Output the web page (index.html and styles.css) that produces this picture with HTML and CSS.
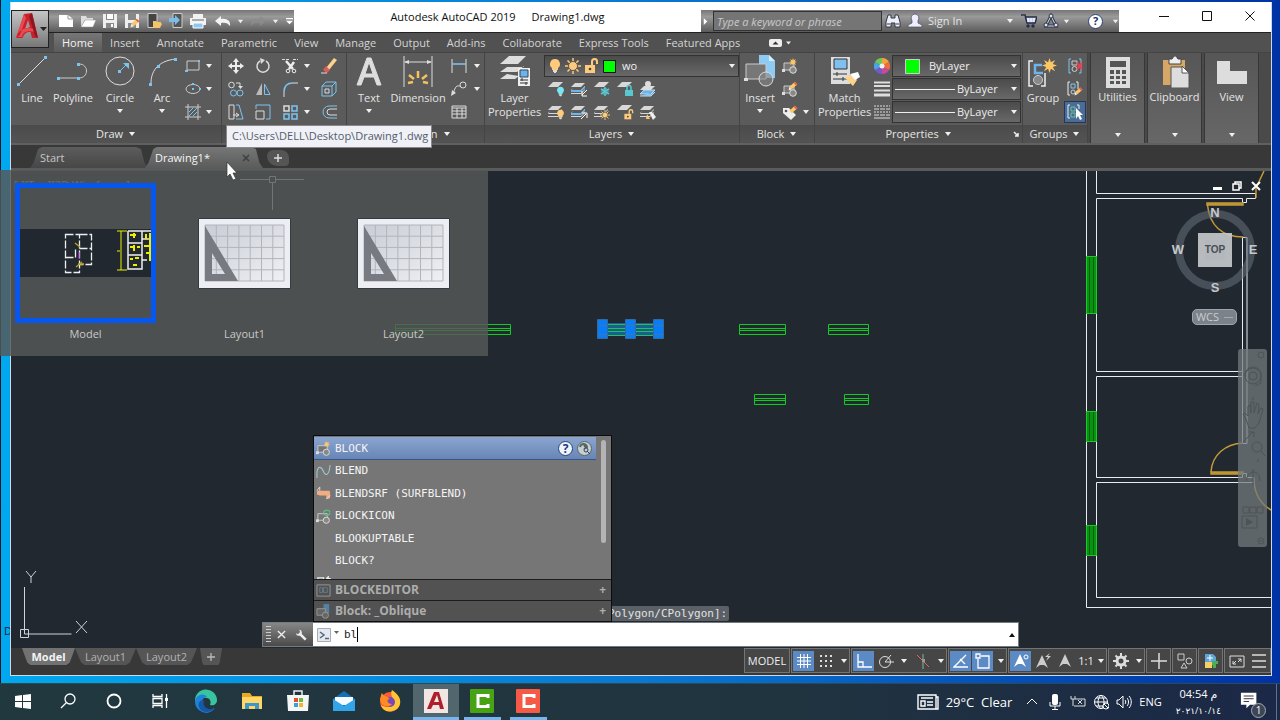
FILE: index.html
```html
<!DOCTYPE html>
<html lang="en">
<head>
<meta charset="utf-8">
<title>Autodesk AutoCAD 2019 - Drawing1.dwg</title>
<link rel="stylesheet" href="styles.css">
</head>
<body>
<svg class="defs" aria-hidden="true">
  <defs>
    <symbol id="down" viewBox="0 0 8 8"><path d="M1 2h6L4 6z" fill="currentColor"/></symbol>
    <symbol id="layers" viewBox="0 0 16 16"><path d="M4 2h10l-4 4H0zM2 7l-2 2h10l4-4v1l-4 4H0M0 12h10l4-4v1l-4 4H0z" fill="#d8d8d8"/></symbol>
    <symbol id="sheet" viewBox="0 0 16 16"><path d="M5 1h10l-5 5H0z" fill="#d8d8d8"/></symbol>
    <symbol id="bulb" viewBox="0 0 16 16"><path d="M8 1a5 5 0 0 0-3 9v2h6v-2a5 5 0 0 0-3-9z" fill="#fdcb7b"/><path d="M6 12h4v2H9v1H7v-1H6z" fill="#ddd"/></symbol>
    <symbol id="sun" viewBox="0 0 16 16"><path d="M8 0v16M0 8h16M2.500 2.500l11 11M13.500 2.500l-11 11" stroke="#fdcb7b" stroke-width="1.500"/><circle cx="8" cy="8" r="4.500" fill="#fdcb7b" stroke="#555"/></symbol>
    <symbol id="unlock" viewBox="0 0 16 16"><path d="M2 7h10v8H2z" fill="#fdcb7b"/><path d="M9 7V3.500a2.500 2.500 0 0 1 5 0V6" fill="none" stroke="#fdcb7b" stroke-width="2"/><circle cx="7" cy="11" r="1.300" fill="#444"/></symbol>
    <symbol id="blockic" viewBox="0 0 16 16"><path d="M2 5h10v7H2z" fill="#777" stroke="#ccc"/><path d="M0 11h3v3H0z" fill="#ddd"/><circle cx="11" cy="12" r="3.300" fill="#888" stroke="#ddd"/></symbol>
    <symbol id="star" viewBox="0 0 16 16"><path d="M8 0l1.500 4.500L14 2l-2.500 4.500L16 8l-4.500 1.500L14 14l-4.500-2.500L8 16l-1.500-4.500L2 14l2.500-4.500L0 8l4.500-1.500L2 2l4.500 2.500z" fill="#fdc766"/></symbol>
    <symbol id="pencil" viewBox="0 0 16 16"><path d="M11 1l4 4-9 8-4-4z" fill="#fdc766"/><path d="M11 1l4 4-2 2-4-4z" fill="#e06050"/><path d="M2 9l4 4-5 2z" fill="#eee"/></symbol>
    <linearGradient id="paper" x1="0" y1="0" x2="1" y2="1"><stop offset="0" stop-color="#c9ccd6"/><stop offset="1" stop-color="#eff0f3"/></linearGradient>
    <symbol id="sheet-paper" viewBox="0 0 93 71">
      <path d="M.5.500h92v70H.5z" fill="#eceef3" stroke="#333a42"/>
      <path d="M7 7h79v56H7z" fill="url(#paper)"/>
      <path d="M7 7h79v56H7zM18.300 7v56M29.600 7v56M40.900 7v56M52.200 7v56M63.500 7v56M74.800 7v56M7 18.200h79M7 29.400h79M7 40.600h79M7 51.800h79" fill="none" stroke="#b1b4bb"/>
      <path d="M7 8v55h33zM14 35l13 21H14z" fill="#777a80" fill-rule="evenodd"/>
    </symbol>
  </defs>
</svg>

<div class="desktop">
  <span class="desk-label">D</span>
  <main class="window">
    <header class="titlebar">
      <div class="quick">
        <button class="qb" aria-label="New"><svg viewBox="0 0 16 16"><path d="M1 2h9l5 4v8H1z" fill="#fff"/><path d="M10 2v4h5" fill="none" stroke="#999"/></svg></button>
        <button class="qb" aria-label="Open"><svg viewBox="0 0 16 16"><path d="M1 14V3h5l1 2h6v2H5z" fill="#ddd"/><path d="M5 7h11l-3 7H1z" fill="#fff" stroke="#888" stroke-width=".5"/></svg></button>
        <button class="qb" aria-label="Save"><svg viewBox="0 0 16 16"><path d="M1 1h14v14H1z" fill="#eee"/><path d="M4 1h8v6H4zM4 10h8v5H4z" fill="#888"/><path d="M5 1h6v5H5zM9 11h2v3H9z" fill="#fff"/></svg></button>
        <button class="qb" aria-label="Save as"><svg viewBox="0 0 16 16"><path d="M1 1h14v14H1z" fill="#eee"/><path d="M4 1h8v6H4zM4 10h8v5H4z" fill="#888"/><use href="#pencil" x="6" y="5" width="10" height="10"/></svg></button>
        <button class="qb" aria-label="Open from mobile"><svg viewBox="0 0 16 16"><path d="M2 .5h9v14H2z" fill="#444" stroke="#ccc"/><path d="M7 15V8h3l1 1h4v1l1 1-2 4z" fill="#f4c46b"/></svg></button>
        <button class="qb" aria-label="Save to mobile"><svg viewBox="0 0 16 16"><path d="M5 .5h9v14H5z" fill="#555" stroke="#ccc"/><path d="M1 5h6V2l5 5-5 5V9H1z" fill="#79bde8"/></svg></button>
        <button class="qb" aria-label="Plot"><svg viewBox="0 0 16 16"><path d="M3 1h10v4H3zM0 5h16v7H0z" fill="#f2f2f2"/><path d="M2 7h12" stroke="#666"/><path d="M3 10h10v5H3z" fill="#8dc8f0" stroke="#fff"/></svg></button>
        <button class="qb wide" aria-label="Undo"><svg viewBox="0 0 16 16"><path d="M0 8l6-5v3c6-1 10 2 9 7-2-3-5-4-9-3v3z" fill="#f4f4f4"/></svg></button>
        <button class="arrow" aria-label="Undo list"><svg><use href="#down"/></svg></button>
        <button class="qb wide dim" aria-label="Redo"><svg viewBox="0 0 16 16"><path d="M16 8l-6-5v3C4 5 0 8 1 13c2-3 5-4 9-3v3z" fill="#8b8b8b"/></svg></button>
        <button class="arrow" aria-label="Redo list"><svg><use href="#down"/></svg></button>
        <button class="arrow big" aria-label="Customize"><svg viewBox="0 0 8 8"><path d="M0 0h8v1.500H0zM0 3h8L4 7z" fill="#fff"/></svg></button>
      </div>
      <h1 class="title"><span>Autodesk AutoCAD 2019</span><span>Drawing1.dwg</span></h1>
      <div class="infocenter">
        <button class="arrow" aria-label="Collapse search"><svg viewBox="0 0 8 8"><path d="M2 0v8l4-4z" fill="#fff"/></svg></button>
        <input class="search" type="text" placeholder="Type a keyword or phrase" aria-label="Type a keyword or phrase">
        <button class="qb" aria-label="Search"><svg viewBox="0 0 16 16"><path d="M3 2h3v3h4V2h3l2 7v5h-5v-4H6v4H1V9z" fill="#eef0f6" stroke="#30374e"/><path d="M2 11h3M11 11h3" stroke="#30374e"/></svg></button>
        <button class="signin"><svg viewBox="0 0 16 16"><path d="M8 1a4 4 0 0 0-3 6.500V10l-4 2v2h14v-2l-4-2V7.500A4 4 0 0 0 8 1z" fill="#eef" stroke="#454b60" stroke-width=".7"/></svg><span>Sign In</span><svg class="caret"><use href="#down"/></svg></button>
        <button class="qb cart" aria-label="App store"><svg viewBox="0 0 16 16"><path d="M0 2h4l2 8h8l2-6H5" fill="#ccd0e4" stroke="#252d4a" stroke-width="1.500"/><path d="M7 5v4M10 5v4M13 5v4" stroke="#fff"/><g fill="#252d4a"><circle cx="7" cy="13" r="1.700"/><circle cx="12" cy="13" r="1.700"/></g></svg></button>
        <button class="qb" aria-label="Autodesk 360"><svg viewBox="0 0 16 16"><path d="M8 3l5 10H3z" fill="none" stroke="#30374e" stroke-width="3"/><path d="M8 3l5 10H3z" fill="none" stroke="#dfe3ef"/><g fill="#dfe3ef" stroke="#30374e"><circle cx="8" cy="3" r="2"/><circle cx="3" cy="12" r="2"/><circle cx="13" cy="12" r="2"/></g></svg></button>
        <button class="arrow" aria-label="360 menu"><svg><use href="#down"/></svg></button>
        <button class="help" aria-label="Help">?</button>
        <button class="arrow" aria-label="Help menu"><svg><use href="#down"/></svg></button>
      </div>
      <div class="winctl">
        <button aria-label="Minimize"><svg viewBox="0 0 12 12"><path d="M1 6.500h10" stroke="#111"/></svg></button>
        <button aria-label="Maximize"><svg viewBox="0 0 12 12"><path d="M1.500 1.500h9v9h-9z" fill="none" stroke="#111"/></svg></button>
        <button aria-label="Close"><svg viewBox="0 0 12 12"><path d="M1.500 1.500l9 9M10.500 1.500l-9 9" stroke="#111"/></svg></button>
      </div>
      <button class="appmenu" aria-label="Application menu"><svg viewBox="0 0 36 36"><path d="M12 3l8-1 6 25h-6l-1.500-6c-4 0-6 1-8 6H4z" fill="#c8202c"/><path d="M16 9l2 7-5 2z" fill="#9b9b9b"/><path d="M4 26c3-7 9-11 18-8l1 3c-8-2-12 0-13 5zM12 3L4 27l4-3 6-17z" fill="#e84a50"/><path d="M20 2l6 25-3-2-6-20z" fill="#8f1720"/><path d="M28 16h7l-3.500 4z" fill="#222"/></svg></button>
    </header>

    <nav class="menu">
      <button class="on">Home</button><button>Insert</button><button>Annotate</button><button>Parametric</button><button>View</button><button>Manage</button><button>Output</button><button>Add-ins</button><button>Collaborate</button><button>Express Tools</button><button>Featured Apps</button>
      <button class="minribbon" aria-label="Minimize ribbon"><svg viewBox="0 0 24 8"><rect width="13" height="8" rx="2" fill="#eee"/><path d="M3.500 5.500h6l-3-3z" fill="#333"/><path d="M17 2.500h5l-2.500 3z" fill="#eee"/></svg></button>
    </nav>

    <section class="ribbon">
      <div class="panel">
        <div class="body">
          <button class="tool w42"><svg viewBox="0 0 32 32"><path d="M3 29L29 3" stroke="#ddd"/><path d="M1 28h3v3H1zM28 1h3v3h-3z" fill="#7cc4f0"/></svg><span>Line</span></button>
          <button class="tool w38"><svg viewBox="0 0 32 32"><path d="M2 23h20c10 0 10-14 0-14" fill="none" stroke="#ccc"/><path d="M0 22h3v3H0zM20 22h3v3h-3zM20 8h3v3h-3z" fill="#7cc4f0"/></svg><span>Polyline</span></button>
          <button class="tool w56"><svg viewBox="0 0 32 32"><circle cx="16" cy="16" r="14" fill="none" stroke="#ddd"/><path d="M16 16l6-6" stroke="#7cc4f0"/><path d="M14 15h3v3h-3zM19 8h6v6z" fill="#7cc4f0"/></svg><span>Circle</span><svg class="caret"><use href="#down"/></svg></button>
          <button class="tool w30"><svg viewBox="0 0 32 32"><path d="M5 28C5 18 10 6 30 4" fill="none" stroke="#ddd"/><path d="M3 28h3v3H3zM11 10h3v3h-3zM28 3h3v3h-3z" fill="#7cc4f0"/></svg><span>Arc</span><svg class="caret"><use href="#down"/></svg></button>
          <div class="grid g2">
            <button class="sm" aria-label="Rectangle"><svg viewBox="0 0 16 16"><path d="M2 3h12v9H2z" fill="none" stroke="#ccc"/><path d="M0 12h3v2H0zM13 2h2v2h-2z" fill="#7cc4f0"/></svg></button><svg class="caret"><use href="#down"/></svg>
            <button class="sm" aria-label="Ellipse"><svg viewBox="0 0 16 16"><ellipse cx="8" cy="8" rx="7" ry="4.500" fill="none" stroke="#ccc"/><path d="M7 7h2v2H7zM7 2h2v2H7zM14 7h2v2h-2z" fill="#7cc4f0"/></svg></button><svg class="caret"><use href="#down"/></svg>
            <button class="sm" aria-label="Hatch"><svg viewBox="0 0 16 16"><path d="M3 0v16M13 0v16M0 3h16M0 13h16" stroke="#ccc"/><path d="M4 8l4-4M4 12l8-8M8 12l4-4" stroke="#7cc4f0"/></svg></button><svg class="caret"><use href="#down"/></svg>
          </div>
        </div>
        <button class="cap">Draw <svg class="caret"><use href="#down"/></svg></button>
      </div>

      <div class="panel">
        <div class="body">
          <div class="grid gmod">
            <button class="sm" aria-label="Move"><svg viewBox="0 0 16 16"><path d="M8 0l3 4H9v3h3V5l4 3-4 3V9H9v3h2l-3 4-3-4h2V9H4v2L0 8l4-3v2h3V4H5z" fill="#eee"/></svg></button>
            <button class="sm" aria-label="Rotate"><svg viewBox="0 0 16 16"><path d="M11 3a6 6 0 1 1-6 0" fill="none" stroke="#ddd" stroke-width="1.500"/><path d="M5 0l5 2-4 4z" fill="#ddd"/></svg></button>
            <button class="sm" aria-label="Trim"><svg viewBox="0 0 16 16"><path d="M0 1.500h7M11 1.500h5" stroke="#ddd" stroke-dasharray="3 1"/><path d="M4 3l7 8M12 4L7 11" stroke="#eee" stroke-width="2.500"/><circle cx="6" cy="13" r="1.800" fill="none" stroke="#eee"/><circle cx="12" cy="13" r="1.800" fill="none" stroke="#eee"/></svg></button><svg class="caret"><use href="#down"/></svg>
            <button class="sm" aria-label="Erase"><svg viewBox="0 0 16 16"><path d="M13 0l3 2-8 10-3-2z" fill="#fdd28a"/><path d="M5 8l4 4-3 3-4-3z" fill="#e05c5c"/><path d="M0 15h6" stroke="#ddd"/></svg></button>
            <button class="sm" aria-label="Copy"><svg viewBox="0 0 16 16"><circle cx="3.500" cy="4" r="2.800" fill="none" stroke="#ddd"/><g fill="none" stroke="#7cc4f0"><circle cx="5.500" cy="12" r="3"/><circle cx="12" cy="12" r="3"/></g><path d="M8 2h4v4" fill="none" stroke="#ddd"/><path d="M10 5h5l-2.500 3z" fill="#ddd"/></svg></button>
            <button class="sm" aria-label="Mirror"><svg viewBox="0 0 16 16"><path d="M7 2v12H1z" fill="#bbb"/><path d="M9.500 3v10.500H15z" fill="none" stroke="#7cc4f0"/></svg></button>
            <button class="sm" aria-label="Fillet"><svg viewBox="0 0 16 16"><path d="M2 16v-5" stroke="#ddd"/><path d="M2 11c0-6 3-9 9-9" fill="none" stroke="#7cc4f0" stroke-width="1.500"/><path d="M11 2h5" stroke="#ddd"/></svg></button><svg class="caret"><use href="#down"/></svg>
            <button class="sm" aria-label="Explode"><svg viewBox="0 0 16 16"><g fill="none" stroke="#7cc4f0"><path d="M1 5h10v10H1zM1 5l4-4h10v10l-4 4M11 5l4-4"/></g><path d="M4 8h4v4H4z" fill="none" stroke="#ddd"/></svg></button>
            <button class="sm" aria-label="Stretch"><svg viewBox="0 0 16 16"><path d="M1 1h5v14H1z" fill="none" stroke="#ddd"/><path d="M8 1h3l4 14H8" fill="none" stroke="#7cc4f0"/><path d="M5 11h5M8 9l3 2-3 2" stroke="#ddd" fill="none"/></svg></button>
            <button class="sm" aria-label="Scale"><svg viewBox="0 0 16 16"><path d="M1 5V1h14v14h-4" fill="none" stroke="#7cc4f0"/><path d="M1 7h8v8H1z" fill="none" stroke="#ddd"/></svg></button>
            <button class="sm" aria-label="Array"><svg viewBox="0 0 16 16"><g fill="none" stroke-width="1.500"><path d="M2 2h5v5H2z" stroke="#ddd"/><path d="M10 2h5v5h-5zM2 10h5v5H2zM10 10h5v5h-5z" stroke="#7cc4f0"/></g></svg></button><svg class="caret"><use href="#down"/></svg>
            <button class="sm" aria-label="Offset"><svg viewBox="0 0 16 16"><path d="M16 2H8a6 6 0 0 0 0 12h8" fill="none" stroke="#7cc4f0"/><path d="M16 5H9a3 3 0 0 0 0 6h7" fill="none" stroke="#ddd"/></svg></button>
          </div>
        </div>
        <button class="cap">Modify <svg class="caret"><use href="#down"/></svg></button>
      </div>

      <div class="panel">
        <div class="body">
          <button class="tool w44"><svg viewBox="0 0 32 32"><path d="M14 3h4l10 27h-4l-3-8H11l-3 8H4zM12 19h8L16 7z" fill="#ddd" stroke="#ddd" fill-rule="evenodd"/></svg><span>Text</span><svg class="caret"><use href="#down"/></svg></button>
          <button class="tool w54"><svg viewBox="0 0 32 32"><path d="M2 1v31M30 1v31M3 7h26" stroke="#ddd"/><path d="M2 7l5-2v4zM30 7l-5-2v4z" fill="#ddd"/><path d="M6 28l5-1M7 20l5 4M16 16v7M25 20l-5 4M26 28l-5-1" stroke="#f5c25e" stroke-width="2.500"/></svg><span>Dimension</span></button>
          <div class="grid g3">
            <button class="sm" aria-label="Linear"><svg viewBox="0 0 16 16"><path d="M1 1v14M15 1v14" stroke="#ddd"/><path d="M1 6h14" stroke="#7cc4f0" stroke-width="1.500"/></svg></button><svg class="caret"><use href="#down"/></svg>
            <button class="sm" aria-label="Leader"><svg viewBox="0 0 16 16"><circle cx="12" cy="4" r="3" fill="none" stroke="#ddd"/><path d="M9 5C4 4 4 8 2 13" fill="none" stroke="#ddd"/><path d="M0 15l1-6 4 3z" fill="#ddd"/></svg></button><svg class="caret"><use href="#down"/></svg>
            <button class="sm" aria-label="Table"><svg viewBox="0 0 16 16"><path d="M1 2h14v12H1zM1 4h14M1 7h14M1 10h14M6 4v10M11 4v10" fill="none" stroke="#ddd"/></svg></button>
          </div>
        </div>
        <button class="cap">Annotation <svg class="caret"><use href="#down"/></svg></button>
      </div>

      <div class="panel layers">
        <div class="body">
          <button class="tool w58"><svg viewBox="0 0 32 32"><path d="M10 1h17l-8 8H1zM8 12l-7 5h17l7-6v1M8 19l-7 5h15l4-3" fill="#ddd"/><path d="M19 13h12v18H19z" fill="#eee"/><path d="M21 15h8v7h-8z" fill="#6bb5ec" stroke="#345"/><path d="M21 25h8M21 28h8M23 23v3M27 27v3" stroke="#333"/></svg><span>Layer<br>Properties</span></button>
          <div class="stack">
            <div class="combo"><svg viewBox="0 0 73 20"><use href="#bulb" x="2" y="2" width="16" height="16"/><use href="#sun" x="20" y="2" width="16" height="16"/><use href="#unlock" x="38" y="2" width="16" height="16"/><path d="M58.500 4.500h12v12h-12z" fill="#0f0" stroke="#111"/></svg><select aria-label="Layer"><option>wo</option></select><svg class="caret"><use href="#down"/></svg></div>
            <div class="grid g5">
              <button class="sm" aria-label="Layer off"><svg viewBox="0 0 16 16"><use href="#sheet"/><use href="#bulb" x="7" y="5" width="11" height="11" class="teal"/></svg></button>
              <button class="sm" aria-label="Isolate"><svg viewBox="0 0 16 16"><use href="#layers"/><path d="M0 9h10l4-4v2l-4 4H0z" fill="#6bb5ec"/><path d="M16 9l-5 5M11 10v5h5" fill="none" stroke="#fff"/></svg></button>
              <button class="sm" aria-label="Freeze"><svg viewBox="0 0 16 16"><use href="#sheet"/><path d="M11 6v9M7 8l8 5M15 8l-8 5" stroke="#58c7cf" stroke-width="1.500"/><circle cx="11" cy="10.500" r="3" fill="none" stroke="#58c7cf"/></svg></button>
              <button class="sm" aria-label="Lock"><svg viewBox="0 0 16 16"><use href="#sheet"/><path d="M8 9h8v6H8z" fill="#58c7cf"/><path d="M10 9V6.500a2 2 0 0 1 4 0V9" fill="none" stroke="#58c7cf" stroke-width="1.500"/></svg></button>
              <button class="sm" aria-label="Make current"><svg viewBox="0 0 16 16"><path d="M4 9h11l-4 4H0zM0 15l11 0 4-4" fill="#6bb5ec" stroke="#bde"/><path d="M4 5h11l-4 4H0z" fill="#ddd"/><circle cx="8" cy="3" r="3" fill="#ddd"/></svg></button>
              <button class="sm" aria-label="Layers on"><svg viewBox="0 0 16 16"><use href="#layers"/><use href="#bulb" x="7" y="5" width="11" height="11"/></svg></button>
              <button class="sm" aria-label="Unisolate"><svg viewBox="0 0 16 16"><use href="#layers"/><path d="M0 9h10l4-4v2l-4 4H0z" fill="#6bb5ec"/><path d="M10 15l5-5M11 9h5v5" fill="none" stroke="#fff"/></svg></button>
              <button class="sm" aria-label="Thaw"><svg viewBox="0 0 16 16"><use href="#layers"/><use href="#sun" x="6" y="6" width="10" height="10"/></svg></button>
              <button class="sm" aria-label="Unlock"><svg viewBox="0 0 16 16"><use href="#sheet"/><use href="#unlock" x="6" y="5" width="11" height="11"/></svg></button>
              <button class="sm" aria-label="Layer match"><svg viewBox="0 0 16 16"><use href="#layers"/><path d="M9 8l3 0 4 5-3 3z" fill="#eee"/><path d="M7 10l3 5-4 0z" fill="#fdc766"/></svg></button>
            </div>
          </div>
        </div>
        <button class="cap">Layers <svg class="caret"><use href="#down"/></svg></button>
      </div>

      <div class="panel">
        <div class="body">
          <button class="tool w38"><svg viewBox="0 0 32 32"><path d="M15 0h10l6 6v17H15z" fill="#8dcaf4"/><path d="M25 0v6h6z" fill="#d6eefb"/><path d="M2 9h20v15H2z" fill="#777" stroke="#ccc"/><circle cx="22" cy="24" r="7" fill="#888" fill-opacity=".6" stroke="#ddd"/><path d="M0 23h4v3H0z" fill="#ddd"/></svg><span>Insert</span><svg class="caret"><use href="#down"/></svg></button>
          <div class="grid gblk">
            <button class="sm" aria-label="Create block"><svg viewBox="0 0 16 16"><use href="#blockic"/><use href="#star" x="7" y="0" width="8" height="8"/></svg></button><span></span>
            <button class="sm" aria-label="Edit block"><svg viewBox="0 0 16 16"><use href="#blockic"/><use href="#pencil" x="6" y="0" width="10" height="10"/></svg></button><span></span>
            <button class="sm" aria-label="Edit attributes"><svg viewBox="0 0 16 16"><path d="M1 4h6l7 7-5 5-8-7z" fill="#eee"/><circle cx="4" cy="7" r="1.300" fill="#555"/><use href="#pencil" x="6" y="1" width="10" height="10"/></svg></button><svg class="caret"><use href="#down"/></svg>
          </div>
        </div>
        <button class="cap">Block <svg class="caret"><use href="#down"/></svg></button>
      </div>

      <div class="panel">
        <div class="body">
          <button class="tool w58"><svg viewBox="0 0 32 32"><path d="M2 2h19v27H2z" fill="#ddd"/><path d="M5 4h13v10H5z" fill="#7fc0ef" stroke="#333"/><path d="M4 19h14M4 24h14M8 17v4M14 22v4" stroke="#333"/><path d="M16 23l7-4 5 6-4 6z" fill="#fdd28a"/><path d="M21 19l8-2 2 5-5 3z" fill="#fff"/></svg><span>Match<br>Properties</span></button>
          <div class="propic">
            <svg viewBox="0 0 16 16"><path d="M8 8V0a8 8 0 0 1 7 4z" fill="#f2a33c"/><path d="M8 8l7-4a8 8 0 0 1 0 8z" fill="#ef6c3e"/><path d="M8 8l7 4a8 8 0 0 1-7 4z" fill="#c84a9c"/><path d="M8 8v8a8 8 0 0 1-7-4z" fill="#7359c9"/><path d="M8 8l-7 4a8 8 0 0 1 0-8z" fill="#45a6e6"/><path d="M8 8L1 4a8 8 0 0 1 7-4z" fill="#71c55b"/><circle cx="8" cy="8" r="2.500" fill="#eee"/></svg>
            <svg viewBox="0 0 16 16"><path d="M0 1.500h16M0 5h16M0 9.500h16" stroke="#ddd" stroke-width="2"/><path d="M0 14h16" stroke="#ddd" stroke-width="3"/></svg>
            <svg viewBox="0 0 16 16"><path d="M0 2h16M0 8h16" stroke="#ddd" stroke-dasharray="2 1"/><path d="M0 5h16M0 11h16" stroke="#ddd" stroke-dasharray="5 1"/><path d="M0 14h16" stroke="#ddd"/></svg>
          </div>
          <div class="stack props">
            <div class="combo"><svg viewBox="0 0 36 20"><path d="M12.500 3.500h14v14h-14z" fill="#0f0" stroke="#ccc"/></svg><select aria-label="Color"><option>ByLayer</option></select><svg class="caret"><use href="#down"/></svg></div>
            <div class="combo line"><hr><select aria-label="Lineweight"><option>ByLayer</option></select><svg class="caret"><use href="#down"/></svg></div>
            <div class="combo line"><hr><select aria-label="Linetype"><option>ByLayer</option></select><svg class="caret"><use href="#down"/></svg></div>
          </div>
        </div>
        <button class="cap">Properties <svg class="caret"><use href="#down"/></svg><svg class="launch" viewBox="0 0 8 8"><path d="M2 2l4 4M6 3v3H3" fill="none" stroke="#eee" stroke-width="1.500"/></svg></button>
      </div>

      <div class="panel">
        <div class="body">
          <button class="tool w38"><svg viewBox="0 0 32 32"><path d="M6 6H2v25h4M18 18v13h-4" fill="none" stroke="#eee" stroke-width="1.500"/><path d="M15 10H8v8h8" fill="none" stroke="#6bb5ec" stroke-width="2.500"/><circle cx="11" cy="25" r="4.500" fill="#888" stroke="#ccc"/><use href="#star" x="15" y="3" width="15" height="15"/></svg><span>Group</span></button>
          <div class="grid gone">
            <button class="sm" aria-label="Ungroup"><svg viewBox="0 0 16 16"><path d="M4 1H2v14h2M12 1h2v14h-2" fill="none" stroke="#7cc4f0"/><path d="M5 3h5v4H5z" fill="none" stroke="#ccc"/><circle cx="7.500" cy="11" r="2.500" fill="none" stroke="#ccc"/><path d="M10 5l5 6M15 5l-5 6" stroke="#ed3d4c" stroke-width="2"/></svg></button>
            <button class="sm" aria-label="Group edit"><svg viewBox="0 0 16 16"><path d="M3 1H1v13h2M9 1h2v7" fill="none" stroke="#eee"/><path d="M4 3h4v4H4z" fill="none" stroke="#7cc4f0"/><circle cx="6" cy="11" r="2" fill="none" stroke="#ccc"/><use href="#pencil" x="7" y="6" width="9" height="9"/></svg></button>
            <button class="sm sel" aria-label="Group selection"><svg viewBox="0 0 16 16"><path d="M3 1H1v13h2M10 1h2v4" fill="none" stroke="#eee"/><path d="M4 3h4v4H4zM4 9h4v4H4z" fill="none" stroke="#6ac59a"/><path d="M9 4v11l2-3 2 4 2-1-2-4h3z" fill="#fff"/></svg></button>
          </div>
        </div>
        <button class="cap">Groups <svg class="caret"><use href="#down"/></svg></button>
      </div>

      <button class="panel solo"><svg viewBox="0 0 32 32"><path d="M4 1h24v31H4z" fill="#ddd"/><path d="M8 5h16v6H8zM8 14h4v4H8zM14 14h4v4h-4zM20 14h4v4h-4zM8 20h4v3H8zM14 20h4v3h-4zM20 20h4v3h-4zM8 25h4v3H8zM14 25h4v3h-4zM20 25h4v3h-4z" fill="#555"/></svg><span>Utilities</span><svg class="caret"><use href="#down"/></svg></button>
      <button class="panel solo"><svg viewBox="0 0 32 32"><path d="M4 4h22v25H4z" fill="#d7a765"/><path d="M10 3h3l2-3h2l2 3h3v5H10z" fill="#eee" stroke="#444"/><path d="M12 11h12l6 6v15H12z" fill="#ddd" stroke="#555"/><path d="M23 10v7h7z" fill="#fff" stroke="#555"/></svg><span>Clipboard</span><svg class="caret"><use href="#down"/></svg></button>
      <button class="panel solo"><svg viewBox="0 0 32 32"><path d="M1 5h13v10h17v13H1z" fill="#ddd"/></svg><span>View</span><svg class="caret"><use href="#down"/></svg></button>
    </section>

    <nav class="filetabs">
      <button class="ftab">Start</button>
      <button class="ftab on"><span>Drawing1*</span><svg viewBox="0 0 8 8"><path d="M1 1l6 6M7 1L1 7" stroke="#3f3f3f" stroke-width="1.500"/></svg></button>
      <button class="fadd" aria-label="New tab"><svg viewBox="0 0 8 8"><path d="M4 0v8M0 4h8" stroke="#ddd" stroke-width="1.500"/></svg></button>
    </nav>

    <section class="canvas">
      <svg class="drawing" viewBox="11 171 1260 477" preserveAspectRatio="xMinYMin slice" role="img" aria-label="Floor plan">
        <path d="M240 179.500h64M272.500 179v31" stroke="#fff"/><path d="M269.500 176.500h6v6h-6z" fill="#212830" stroke="#fff"/>
        <g fill="none" stroke="#1c2" stroke-width="1">
          <path d="M395.500 324.500h115v10h-115zM395.500 328.500h115M395.500 330.500h115"/>
          <path d="M739.500 324.500h46v10h-46zM739.500 328.500h46M739.500 330.500h46"/>
          <path d="M828.500 324.500h40v10h-40zM828.500 328.500h40M828.500 330.500h40"/>
          <path d="M754.500 394.500h31v10h-31zM754.500 398.500h31M754.500 400.500h31"/>
          <path d="M844.500 394.500h24v10h-24zM844.500 398.500h24M844.500 400.500h24"/>
        </g>
        <path d="M602 323h57v13h-57z" fill="#1c5d8f"/><path d="M602 324.500h57M602 328.500h57M602 331.500h57M602 335.500h57" stroke="#1fc35b"/>
        <path d="M597.500 319.500h10v19h-10zM625.500 319.500h10v19h-10zM653.500 319.500h10v19h-10z" fill="#0a7df5" stroke="#35689f"/><path d="M598 325.500h9M598 334.500h9M626 325.500h9M626 334.500h9M654 325.500h9M654 334.500h9" stroke="#3b78b8"/>
        <g fill="none" stroke="#e8ebef">
          <path d="M1086.500 171v436.500H1271M1096.500 171v22.500h159v5h-9v4h-4v-4H1096.500v173h146v-134h4.500v206h-4.500v-67H1096.500v101h146v-4h4v4h7.500v5H1096.500v115H1271M1242.500 371v6"/>
        </g>
        <g fill="none" stroke="#c49a37" stroke-width="1.500">
          <path d="M1264 171l-8 17v10M1207.500 205c2 20 14 32 36 32M1243 443c-18 1-31 12-32 29M1254 482c1 12 7 22 17 28"/>
          <path d="M1207 203h36v2h-36zM1211 472h32v2h-32z" fill="#b98722"/>
        </g>
        <g fill="#07940e" stroke="#1dc927">
          <path d="M1086.500 256.500h10v57h-10zM1086.500 411.500h10v30h-10zM1086.500 525.500h10v30h-10z"/>
          <path d="M1089.500 257v56M1093.500 257v56M1089.500 412v29M1093.500 412v29M1089.500 526v29M1093.500 526v29" stroke="#075d12"/>
        </g>
        <g fill="none" stroke="#d0d3d8"><path d="M24.500 587v47h47M20.500 629.500h8v8h-8zM26 571l5 6 5-6M31 577v6M76 621l11 12M87 621l-11 12"/></g>
      </svg>

      <p class="vplabel">[-][Top][2D Wireframe]</p>

      <div class="mdi">
        <button aria-label="Minimize drawing"><svg viewBox="0 0 10 10"><path d="M0 6h9v3H0z" fill="#fff"/></svg></button>
        <button aria-label="Restore drawing"><svg viewBox="0 0 10 10"><path d="M3 3V1h6v6H7M1 3h6v6H1z" fill="none" stroke="#fff" stroke-width="1.500"/></svg></button>
        <button aria-label="Close drawing"><svg viewBox="0 0 10 10"><path d="M1 1l8 8M9 1L1 9" stroke="#fff" stroke-width="2"/></svg></button>
      </div>

      <div class="cube">
        <svg viewBox="0 0 90 90"><circle cx="45" cy="45" r="36" fill="none" stroke="#67717c" stroke-opacity=".55" stroke-width="8"/><path d="M28 28h34v34H28z" fill="#c6c8ca" fill-opacity=".92"/><path d="M35 35h20v20H35z" fill="#b4b8bc"/></svg>
        <span class="n">N</span><span class="w">W</span><span class="top">TOP</span><span class="e">E</span><span class="s">S</span>
      </div>
      <button class="wcs">WCS <i></i></button>

      <div class="navbar">
        <svg viewBox="0 0 29 198"><g fill="none" stroke="#4d5356"><circle cx="23" cy="6" r="3"/><path d="M7 27a8 8 0 0 1 16-2v9l-6 3"/><circle cx="15" cy="27" r="8"/><circle cx="15" cy="27" r="4"/><path d="M15 48v3M8 70l-3-5 2-1 3 3V57l2-1 1 8V53l3 0v11l3-10 2 1-1 10 3-6 2 1-4 14-4 5h-6zM5 93l10-10M11 83h5v5M20 110v3"/><circle cx="19" cy="98" r="5"/><path d="M23 102l4 5M8 132c2-12 14-12 14 0M15 120v17M5 158h6v6H5zM12 158h6v6h-6zM19 158h6v6h-6zM4 167h15v12H4z"/><circle cx="23" cy="192" r="3"/><path d="M21 192h4"/></g><path d="M8 169l7 4-7 4z" fill="#4d5356"/></svg>
      </div>

      <div class="preview">
        <button class="card"><span class="thumb model"><svg viewBox="0 0 131 48"><path d="M0 0h131v48H0z" fill="#212830"/><path d="M45.500 5.500h14v38h-14zM59.500 5.500h12v30h-12M59.500 19.500h12M45.500 28.500h10v-9" fill="none" stroke="#eee" stroke-width="1.300" stroke-dasharray="8 2"/><path d="M55 14l5 4M58 35h6M56 38l6-5" stroke="#b5a018" stroke-width="1.500"/><path d="M59 23v7" stroke="#92b"/><path d="M101 2v39M97 2h10M97 41h10M97 22h3" stroke="#ee0" /><path d="M108 2h23M108 2v38h14V2M108 14h14M108 26h14M122 10h9M122 31h5" fill="none" stroke="#eee" stroke-width="1.500"/><path d="M110 6h6M114 4v5M110 18h4M117 18h3M114 16v6M110 30h3M115 29h4M113 36h4M126 5v5M124 17h5M126 24h3M130 4v28" stroke="#ee0" stroke-width="2"/></svg></span><span>Model</span></button>
        <button class="card"><span class="thumb"><svg><use href="#sheet-paper"/></svg></span><span>Layout1</span></button>
        <button class="card"><span class="thumb"><svg><use href="#sheet-paper"/></svg></span><span>Layout2</span></button>
      </div>

      <p class="history">Polygon/CPolygon]:</p>

      <div class="suggest">
        <ul class="matches">
          <li class="on"><svg viewBox="0 0 16 16"><use href="#blockic"/><use href="#star" x="8" y="0" width="7" height="7"/></svg><span>BLOCK</span><b class="round">?</b><b class="round web"><svg viewBox="0 0 12 12"><path d="M2 5c1-4 6-4 7 0L6 7M6 3l2 3" fill="none" stroke="#566" stroke-width="2"/><circle cx="8" cy="8" r="2" fill="#bcd" stroke="#345"/><path d="M9 9l3 3" stroke="#345"/></svg></b></li>
          <li><svg viewBox="0 0 16 16"><path d="M1 15V9c1-8 5-6 7-1s6 5 7-7" fill="none" stroke="#9cc3cc" stroke-width="1.200"/></svg><span>BLEND</span></li>
          <li><svg viewBox="0 0 16 16"><path d="M1 5h13l1 1v7l-4 1v-4H4L1 9z" fill="#f1ad82"/><path d="M1 5l3-4v4M11 14l4-4" fill="none" stroke="#ddd"/></svg><span>BLENDSRF (SURFBLEND)</span></li>
          <li><svg viewBox="0 0 16 16"><use href="#blockic"/><path d="M8 4c1-4 6-3 7-1M15 4c-1 4-6 3-7 1" fill="none" stroke="#5fb783" stroke-width="1.500"/></svg><span>BLOCKICON</span></li>
          <li><svg viewBox="0 0 16 16"></svg><span>BLOOKUPTABLE</span></li>
          <li><svg viewBox="0 0 16 16"></svg><span>BLOCK?</span></li>
          <li><svg viewBox="0 0 16 16"><path d="M2 2h6v5H2zM0 5h7M11 3l2-2v5M11 3h4v3" fill="none" stroke="#eee" stroke-width="1.500"/></svg></li>
        </ul>
        <div class="cat"><svg viewBox="0 0 16 16"><path d="M1 2h14v12H1z" fill="none" stroke="#999"/><path d="M4 5h3v5H4zM8 5h4v5H8z" fill="none" stroke="#607f8b"/></svg><span>BLOCKEDITOR</span><i>+</i></div>
        <div class="cat"><svg viewBox="0 0 16 16"><path d="M8 0h6v10H8z" fill="#55809f"/><path d="M1 5h9v7H1z" fill="#666" stroke="#999"/><circle cx="10" cy="12" r="3.300" fill="#666" stroke="#999"/></svg><span>Block: _Oblique</span><i>+</i></div>
      </div>

      <div class="cmd">
        <i class="grip"></i>
        <button aria-label="Close command line"><svg viewBox="0 0 10 10"><path d="M1 1l8 8M9 1L1 9" stroke="#eee" stroke-width="1.500"/></svg></button>
        <button aria-label="Customize"><svg viewBox="0 0 14 14"><path d="M5 5l7.500 7.500" stroke="#eee" stroke-width="3"/><path d="M5 1a3.500 3.500 0 1 1-4 4l2.500 1L6 3.500z" fill="#eee"/></svg></button>
        <label class="prompt"><svg viewBox="0 0 22 14"><path d="M.5.500h13v13H.5z" fill="#e4e8ef" stroke="#a6adb9"/><path d="M3 4l4 3-4 3M8 10.500h4" fill="none" stroke="#56657e" stroke-width="1.500"/><path d="M17 3h5l-2.500 3z" fill="#666"/></svg><input type="text" value="bl" aria-label="Command"></label>
        <span class="up"><svg viewBox="0 0 8 8"><path d="M1 6h6L4 2z" fill="#111"/></svg></span>
      </div>
    </section>

    <footer class="status">
      <div class="ltabs"><button class="on">Model</button><button>Layout1</button><button>Layout2</button><button class="plus" aria-label="New layout"><svg viewBox="0 0 8 8"><path d="M4 0v8M0 4h8" stroke="#bbb" stroke-width="1.300"/></svg></button></div>
      <div class="tools">
        <div class="seg"><button class="txt">MODEL</button></div>
        <div class="seg"><button class="on" aria-label="Grid"><svg viewBox="0 0 16 16"><path d="M4.500 1v14M11.500 1v14M1 4.500h14M1 11.500h14M8 1v14M1 8h14" stroke="#fff"/></svg></button><button aria-label="Snap"><svg viewBox="0 0 16 16"><path d="M2 3h2M7 3h2M12 3h2M2 8h2M7 8h2M12 8h2M2 13h2M7 13h2M12 13h2" stroke="#ddd" stroke-width="2"/></svg></button><svg class="caret"><use href="#down"/></svg></div>
        <div class="seg"><button class="on" aria-label="Ortho"><svg viewBox="0 0 16 16"><path d="M2 1v13h14M2 9h5v5" fill="none" stroke="#fff" stroke-width="1.300"/></svg></button><button aria-label="Polar"><svg viewBox="0 0 16 16"><circle cx="7" cy="9" r="5.500" fill="none" stroke="#ddd"/><path d="M7 9h9M7 9l6-7" stroke="#ddd"/></svg></button><svg class="caret"><use href="#down"/></svg><button aria-label="Isometric"><svg viewBox="0 0 16 16"><path d="M2 2l12 12" stroke="#d66"/><path d="M8 1v15" stroke="#7b9"/><path d="M7 6h3v3H7z" fill="#999"/></svg></button><svg class="caret"><use href="#down"/></svg></div>
        <div class="seg"><button class="on" aria-label="Object tracking"><svg viewBox="0 0 16 16"><path d="M13 2L1 14h14M7 6l5 5" fill="none" stroke="#fff" stroke-width="1.300"/></svg></button><button class="on" aria-label="Object snap"><svg viewBox="0 0 16 16"><path d="M6 3h8v12H3V6M1 1h4v4H1z" fill="none" stroke="#fff" stroke-width="1.300"/></svg></button><svg class="caret"><use href="#down"/></svg></div>
        <div class="seg"><button class="on" aria-label="Annotation visibility"><svg viewBox="0 0 16 16"><path d="M7 1l6 13-4-3H5l-4 3z" fill="#fff"/><circle cx="13" cy="4" r="2" fill="none" stroke="#fff"/></svg></button><button aria-label="Auto scale"><svg viewBox="0 0 16 16"><path d="M7 2l6 13-4-3H5l-4 3zM15 0l-5 4h3l-2 4 5-5h-3z" fill="#ccc"/></svg></button><button aria-label="Annotation scale"><svg viewBox="0 0 16 16"><path d="M8 1l6 13-4-3H6l-4 3z" fill="#ccc"/></svg></button><button class="txt scale">1:1</button><svg class="caret near"><use href="#down"/></svg></div>
        <div class="seg"><button aria-label="Workspace"><svg viewBox="0 0 16 16"><circle cx="8" cy="8" r="4" fill="none" stroke="#ddd" stroke-width="3"/><path d="M8 0v3M8 13v3M0 8h3M13 8h3M2.500 2.500l2 2M11.500 11.500l2 2M13.500 2.500l-2 2M4.500 11.500l-2 2" stroke="#ddd" stroke-width="2"/></svg></button><svg class="caret"><use href="#down"/></svg></div>
        <div class="seg"><button aria-label="Annotation monitor"><svg viewBox="0 0 16 16"><path d="M8 0v16M0 8h16" stroke="#ddd" stroke-width="1.500"/></svg></button></div>
        <div class="seg"><button aria-label="Isolate objects"><svg viewBox="0 0 16 16"><path d="M1 1h6v6H1zM4 15l3-5 3 5z" fill="none" stroke="#ccc"/><circle cx="12" cy="8" r="3" fill="none" stroke="#ccc"/></svg></button></div>
        <div class="seg"><button aria-label="Graphics performance"><svg viewBox="0 0 16 16"><path d="M2 1h8l3 3v8H2z" fill="#5ca5d6"/><path d="M2 9h7v6H2z" fill="#f5d066"/><path d="M9 8h6v3h-2v4h-3z" fill="#4cae4e"/><path d="M4 5h6M7 2v6" stroke="#fff"/></svg></button></div>
        <div class="seg"><button aria-label="Clean screen"><svg viewBox="0 0 16 16"><path d="M1 3h14v11H1zM4 11l3-3M4 8v3h3M12 6L9 9M12 9V6H9" fill="none" stroke="#ddd"/></svg></button><button aria-label="Customization"><svg viewBox="0 0 16 16"><path d="M1 2h14M1 8h14M1 14h14" stroke="#ddd" stroke-width="1.700"/></svg></button></div>
      </div>
    </footer>

    <div class="tip" role="tooltip">C:\Users\DELL\Desktop\Drawing1.dwg</div>
    <svg class="pointer" viewBox="0 0 12 20"><path d="M1 1v15l3-3 3 6 3-1-3-6h4z" fill="#fff" stroke="#333" stroke-width=".7"/></svg>
  </main>
</div>

<footer class="taskbar">
  <div class="apps">
    <button aria-label="Start"><svg viewBox="0 0 24 24"><path d="M4 7l7-1v6H4zM12 6l8-1v7h-8zM4 13h7v6l-7-1zM12 13h8v7l-8-1z" fill="#fff"/></svg></button>
    <button aria-label="Search"><svg viewBox="0 0 24 24"><circle cx="14" cy="10" r="5" fill="none" stroke="#fff" stroke-width="1.300"/><path d="M10.500 13.500L5 19" stroke="#fff" stroke-width="1.300"/></svg></button>
    <button aria-label="Cortana"><svg viewBox="0 0 24 24"><circle cx="12" cy="12" r="6.500" fill="none" stroke="#fff" stroke-width="1.800"/></svg></button>
    <button aria-label="Task view"><svg viewBox="0 0 24 24"><path d="M5 5v2.500h9V5M5 19v-2.500h9V19M5 9.500h9v5H5zM18.500 5v14" fill="none" stroke="#fff" stroke-width="1.300"/><path d="M17 9h3v3h-3z" fill="#fff"/></svg></button>
    <button aria-label="Edge"><svg viewBox="0 0 24 24"><path d="M1 12a11 11 0 0 1 22-1c0 4-3 6-7 5 2-4-1-8-6-7-5 0-8 3-9 3z" fill="#37c5a0"/><path d="M1 12c1-6 9-9 12-4-4 0-6 4-4 8 2 5 8 5 12 3a11 11 0 0 1-20-7z" fill="#1e83d8"/><path d="M10 12c-2 6 4 10 11 7-5 6-14 5-16-1-2-5 3-8 5-6z" fill="#1557a7"/></svg></button>
    <button aria-label="File Explorer"><svg viewBox="0 0 24 24"><path d="M2 4h8l2 3h10v13H2z" fill="#e9a925"/><path d="M2 8h20v12H2z" fill="#ffd767"/><path d="M5 20v-6h14v6h-4v-3H9v3z" fill="#4094ce"/></svg></button>
    <button aria-label="Store"><svg viewBox="0 0 24 24"><path d="M8 6V2h8v4" fill="none" stroke="#eee" stroke-width="1.500"/><path d="M1 6h22l-1 16H2z" fill="#f6f6f6"/><path d="M8 9h4v4H8z" fill="#e64b35"/><path d="M13 9h4v4h-4z" fill="#71b83d"/><path d="M8 14h4v4H8z" fill="#35a2dc"/><path d="M13 14h4v4h-4z" fill="#f3b52b"/></svg></button>
    <button aria-label="Mail"><svg viewBox="0 0 24 24"><path d="M12 2l11 8v12H1V10z" fill="#1470b9"/><path d="M3 8h18v8H3z" fill="#f5fbff"/><path d="M1 10l11 7 11-7v12H1z" fill="#32a5e8"/></svg></button>
    <button aria-label="Firefox"><svg viewBox="0 0 24 24"><circle cx="12" cy="13" r="10" fill="#fa5b32"/><path d="M14 1c7 5 9 9 8 14-2 9-17 10-19 1 8 5 15 0 12-6-1-3-3-5-1-9z" fill="#ffc534"/><circle cx="12" cy="13" r="5" fill="#7648b8"/><path d="M2 10c1-3 1-5 2-6 1 3 5 3 8 6-4 0-3 5 2 5-4 5-12 1-12-5z" fill="#ff8b22"/></svg></button>
    <button class="cur" aria-label="AutoCAD"><svg viewBox="0 0 24 24"><path d="M0 0h24v24H0z" fill="#f1e6e4"/><path d="M10 3h5l5 17h-4l-1-4H9l-2 4H3zM10 13h5l-2-7z" fill="#ad1f2a" fill-rule="evenodd"/></svg></button>
    <button class="run" aria-label="Camtasia"><svg viewBox="0 0 24 24"><rect width="24" height="24" rx="1" fill="#48a314"/><path d="M18 9V6.500H8v11h10V15" fill="none" stroke="#fff" stroke-width="3"/></svg></button>
    <button class="run" aria-label="Camtasia recorder"><svg viewBox="0 0 24 24"><rect width="24" height="24" rx="1" fill="#f65a47"/><path d="M18 9V6.500H8v11h10V15" fill="none" stroke="#fff" stroke-width="3"/></svg></button>
  </div>
  <div class="tray">
    <svg class="news" viewBox="0 0 22 16"><path d="M1 1h18v14H1zM19 3h2v12h-3M4 4h12M10 8h6M10 11h6M4 7h4v5H4z" fill="none" stroke="#fff" stroke-width="1.400"/></svg>
    <span class="weather">29°C&nbsp; Clear</span>
    <svg viewBox="0 0 16 16"><path d="M3 10l5-5 5 5" fill="none" stroke="#fff"/></svg>
    <svg viewBox="0 0 16 16"><rect x="5" y="0" width="6" height="11" rx="2" fill="#fff"/><path d="M3 8v4h10V8M8 12v4M5 15.500h6" fill="none" stroke="#fff"/></svg>
    <svg viewBox="0 0 16 16"><path d="M5 5h10v7H4M1 2v3h4V2M3 5v7M8 6l4 4M12 6l-4 4" fill="none" stroke="#ddd"/></svg>
    <svg viewBox="0 0 16 16"><circle cx="8" cy="8" r="6.500" fill="none" stroke="#fff"/><path d="M2 8h12M8 1c-4 4-4 10 0 14M8 1c4 4 4 10 0 14M3 4h10M3 12h10" fill="none" stroke="#fff"/><circle cx="13" cy="12" r="3" fill="#1e2f45" stroke="#fff"/><path d="M11 10l4 4" stroke="#fff"/></svg>
    <svg viewBox="0 0 16 16"><path d="M1 6h2l4-4v12l-4-4H1zM9 6c1 1 1 3 0 4M11 4c2 2 2 6 0 8M13 2c3 3 3 9 0 12" fill="none" stroke="#fff"/></svg>
    <span class="lang">ENG</span>
    <time class="clock"><span>04:54 م</span><span class="date">٢٠٢١/١٠/١٤</span></time>
    <span class="notes"><svg viewBox="0 0 22 22"><path d="M1 2h17v13h-7l-4 4v-4H1z" fill="#fff"/><path d="M4 5.500h11M4 8.500h11M4 11.500h6" stroke="#223"/></svg><b>1</b></span>
  </div>
</footer>
</body>
</html>
```

FILE: styles.css
```css
* { box-sizing: border-box; }
body {
  margin: 0;
  height: 100vh;
  display: flex;
  flex-direction: column;
  overflow: hidden;
  font: 11px/14px "Open Sans", "Noto Sans", sans-serif;
  color: #e4e4e4;
}
button {
  font: inherit;
  color: inherit;
  background: none;
  border: 0;
  padding: 0;
  display: flex;
  align-items: center;
  justify-content: center;
}
p, ul, h1 { margin: 0; padding: 0; }
svg { display: block; flex: none; }
.defs { position: absolute; width: 0; height: 0; }
.caret { width: 8px; height: 8px; color: #f0f0f0; }

/* desktop and window frame */
.desktop {
  flex: 1;
  min-height: 0;
  display: flex;
  position: relative;
  padding: 2px 8px 7px 9px;
  background: linear-gradient(90deg, #00a8f0, #0878d2 50%, #0032a6);
  border-left: 1px solid #06151f;
}
.desk-label { position: absolute; left: 3px; top: 624px; color: #123; font-size: 11px; }
.window {
  flex: 1;
  min-width: 0;
  display: flex;
  flex-direction: column;
  position: relative;
  background: #383838;
  border: 1px solid #cdd9e4;
  border-top: 0;
}

/* title bar */
.titlebar { display: flex; height: 30px; background: #fff; position: relative; align-items: flex-end; }
.quick, .infocenter {
  height: 22px;
  display: flex;
  align-items: center;
  background: linear-gradient(#767676, #9a9a9a 30%, #5b5b5b);
}
.quick { margin-left: 38px; width: 245px; padding-left: 6px; }
.qb { width: 22px; height: 22px; }
.qb svg { width: 16px; height: 16px; }
.qb.wide { width: 27px; }
.quick .arrow:last-child { margin-left: 6px; }
.arrow { width: 8px; height: 22px; color: #eee; }
.arrow svg { width: 7px; height: 7px; }
.title {
  flex: 1;
  display: flex;
  gap: 16px;
  justify-content: center;
  align-self: center;
  font-size: 11px;
  font-weight: 400;
  color: #111;
}
.infocenter { width: 418px; }
.search {
  width: 169px;
  height: 20px;
  margin-left: 4px;
  padding: 0 3px;
  border: 1px solid #333;
  background: #757575;
  color: #eee;
  font: italic 11px/14px "Open Sans", sans-serif;
}
.search::placeholder { color: #c9c9c9; opacity: 1; }
.signin { flex: 1; gap: 5px; padding-left: 3px; justify-content: flex-start; }
.signin svg { width: 16px; height: 16px; }
.signin .caret { width: 8px; height: 8px; margin-left: auto; }
.cart { margin-left: 4px; }
.help {
  width: 15px;
  height: 15px;
  margin: 0 8px 0 18px;
  border-radius: 50%;
  background: #fff;
  border: 1px solid #29416f;
  color: #17356f;
  font-weight: 700;
}
.winctl { display: flex; height: 30px; margin-left: 23px; }
.winctl button { width: 43px; height: 28px; }
.winctl svg { width: 12px; height: 12px; }
.appmenu {
  position: absolute;
  left: 0;
  top: 8px;
  width: 38px;
  height: 38px;
  border: 1px solid #222;
  background: linear-gradient(#c5c5c5, #777);
  z-index: 2;
}
.appmenu svg { width: 36px; height: 36px; }

/* ribbon */
.menu {
  display: flex;
  height: 20px;
  padding: 0 0 0 43px;
  background: #515151;
  border-top: 1px solid #222;
}
.menu button { padding: 0 9px 0 8px; color: #d4d4d4; }
.menu .on { background: linear-gradient(#777, #5b5b5b); color: #f2f2f2; }
.menu .minribbon { margin-left: 12px; }
.menu svg { width: 24px; height: 8px; }
.ribbon { display: flex; height: 93px; background: #4a4a4a; border-top: 1px solid #444; border-bottom: 2px solid #606060; }
.panel { display: flex; flex-direction: column; background: #5b5b5b; border-right: 1px solid #444; }
.body { display: flex; flex: 1; padding-top: 2px; align-items: flex-start; }
.cap {
  height: 18px;
  gap: 5px;
  background: linear-gradient(#4b4b4b, #535353);
  position: relative;
}
.cap .launch { position: absolute; right: 2px; width: 8px; height: 8px; }
.tool { flex-direction: column; justify-content: flex-start; line-height: 14px; gap: 2px; }
.tool svg { width: 32px; height: 32px; }
.tool svg.caret { width: 8px; height: 8px; }
.tool span { white-space: nowrap; margin-top: 2px; }
.w30 { width: 30px; }
.w38 { width: 40px; }
.w42 { width: 42px; }
.w44 { width: 44px; }
.w54 { width: 54px; }
.w56 { width: 54px; }
.w58 { width: 59px; }
.grid { display: grid; grid-auto-rows: 22px; row-gap: 1px; align-items: center; justify-items: center; }
.g2 { grid-template-columns: 24px 8px; margin: 0 8px 0 4px; }
.gmod { grid-template-columns: 27px 27px 27px 8px 35px; }
.g3 { grid-template-columns: 28px 8px; margin-right: 3px; }
.g5 { grid-template-columns: repeat(5, 23px); }
.gblk { grid-template-columns: 20px 12px; margin-right: 2px; }
.gone { grid-template-columns: 24px; }
.sm { width: 22px; height: 22px; }
.sm svg { width: 16px; height: 16px; overflow: visible; }
.sm.sel { background: #4c6c98; border: 1px solid #22375a; }
.teal { filter: hue-rotate(140deg); }
.stack { display: grid; grid-template-columns: 1fr; row-gap: 1px; }
.layers .stack { width: 195px; }
.props { width: 129px; margin-right: 1px; }
.combo {
  display: flex;
  align-items: center;
  height: 22px;
  padding-right: 2px;
  border: 1px solid #333;
  background: linear-gradient(#4b4b4b, #686868);
}
.combo svg:first-child { height: 20px; }
.layers .combo svg:first-child { width: 73px; }
.layers .combo select { margin-left: 4px; }
.props .combo svg:first-child { width: 36px; }
.combo select {
  flex: 1;
  min-width: 0;
  appearance: none;
  border: 0;
  padding: 0;
  background: transparent;
  color: #eee;
  font: 11px/14px "Open Sans", sans-serif;
}
.combo hr { width: 60px; margin: 0 2px; border: 0; border-top: 1px solid #eee; }
.propic { display: grid; grid-auto-rows: 22px; row-gap: 1px; width: 18px; align-items: center; }
.propic svg { width: 16px; height: 16px; }
.solo {
  width: 55px;
  margin-left: 2px;
  padding: 3px 0 4px;
  justify-content: flex-start;
  background: linear-gradient(#565656, #676767);
  border: 1px solid #373737;
  border-width: 0 1px;
}
.solo svg { width: 32px; height: 32px; }
.solo span { margin-top: 2px; }
.solo svg.caret { width: 8px; height: 8px; margin-top: auto; }

/* drawing tabs */
.filetabs { display: flex; height: 26px; padding: 2px 0 0 19px; background: #383838; border-bottom: 3px solid #5a5c5c; }
.ftab {
  width: 118px;
  padding: 0 10px;
  justify-content: flex-start;
  color: #c6c6c6;
  background: linear-gradient(#5c5c5c, #474747);
  clip-path: polygon(0 100%, 3% 75%, 7% 10%, 10% 0, 90% 0, 94% 10%, 97% 75%, 100% 100%);
}
.ftab.on { width: 118px; margin-left: -3px; justify-content: space-between; color: #f4f4f4; background: linear-gradient(#767676, #5a5c5c); padding-right: 13px; }
.ftab svg, .fadd svg { width: 8px; height: 8px; }
.fadd { width: 22px; height: 16px; align-self: center; margin-left: 4px; background: #555; border-radius: 6px 8px 4px 10px; }

/* drawing area */
.canvas { flex: 1; min-height: 0; position: relative; background: #212830; }
.drawing { width: 100%; height: 100%; }
.vplabel { position: absolute; left: 3px; top: 7px; color: #c8c8c8; }
.mdi { position: absolute; right: 10px; top: 10px; display: flex; gap: 9px; }
.mdi svg { width: 10px; height: 10px; }
.cube { position: absolute; right: 11px; top: 34px; width: 90px; height: 90px; color: #c5c8cc; font: bold 13px/16px "Liberation Sans", sans-serif; text-align: center; }
.cube svg { width: 90px; height: 90px; }
.cube span { position: absolute; width: 30px; }
.cube .n { left: 30px; top: 0; }
.cube .s { left: 30px; top: 75px; }
.cube .w { left: -7px; top: 37px; }
.cube .e { left: 68px; top: 37px; }
.cube .top { left: 30px; top: 37px; font-size: 10px; color: #4a4e54; }
.wcs { position: absolute; right: 34px; top: 138px; width: 45px; height: 16px; gap: 5px; border-radius: 5px; border: 1px solid #a0a5ab; background: #7c828a; color: #c9ccd0; }
.wcs i { width: 9px; border-top: 1px solid #a5a9ae; }
.navbar { position: absolute; right: 4px; top: 178px; width: 29px; height: 198px; border-radius: 3px; background: rgba(115, 122, 124, .75); }
.navbar svg { width: 29px; height: 198px; }
.preview {
  position: absolute;
  left: -11px;
  top: -1px;
  display: flex;
  gap: 18px;
  width: 488px;
  height: 186px;
  padding: 13px 0 0 15px;
  background: rgba(87, 89, 87, .83);
}
.card { flex-direction: column; justify-content: flex-start; gap: 4px; width: 141px; color: #c8c8c8; }
.thumb { display: flex; align-items: center; justify-content: center; width: 141px; height: 140px; }
.thumb svg { width: 93px; height: 71px; }
.thumb.model { border: 5px solid #0656f0; background: #4d5050; }
.thumb.model svg { width: 131px; height: 48px; }
.history { position: absolute; left: 588px; top: 435px; padding: 0 2px 0 9px; border-radius: 2px; background: #5a6066; color: #e2e2e2; font: 11px/15px "DejaVu Sans Mono", monospace; }

/* command suggestions */
.suggest { position: absolute; left: 302px; bottom: 26px; width: 299px; border: 1px solid #0c0c0c; background: #767676; }
.matches { list-style: none; height: 143px; padding-top: 1px; overflow: hidden; position: relative; font: 11px/22px "DejaVu Sans Mono", monospace; color: #f4f4f4; }
.matches::after { content: ""; position: absolute; right: 5px; top: 4px; width: 5px; height: 103px; border-radius: 3px; background: #b4b4b4; }
.matches li { display: flex; align-items: center; height: 22px; margin-right: 15px; padding: 0 4px 0 2px; gap: 4px; }
.matches li:nth-child(odd) { height: 23px; }
.matches li > svg, .cat svg { width: 15px; height: 15px; }
.matches .on { background: linear-gradient(#8ba5d0, #6684b4); box-shadow: inset 0 -1px #37558a; }
.round { width: 15px; height: 15px; border-radius: 50%; border: 1px solid #27417c; background: #f0f3f8; color: #183b86; font: bold 12px/13px "Open Sans", sans-serif; text-align: center; }
.matches .round:nth-child(3) { margin-left: auto; }
.round svg { width: 12px; height: 12px; }
.web { background: #c6cfcd; border-color: #56686c; }
.cat { display: flex; align-items: center; gap: 4px; height: 21px; padding: 0 5px 0 2px; border-top: 1px solid #1d1d1d; background: #525252; color: #adadad; font-size: 12px; font-weight: 700; }
.cat i { margin-left: auto; font-style: normal; }

/* command line */
.cmd { position: absolute; left: 251px; bottom: 1px; width: 757px; height: 25px; display: flex; align-items: center; border: 1px solid #757a80; background: linear-gradient(#868686, #4a4a4a); }
.grip { width: 5px; height: 17px; margin-left: 3px; background: repeating-linear-gradient(#ccc 0 1px, transparent 1px 3px); }
.cmd button { width: 20px; height: 22px; }
.cmd button svg { width: 12px; height: 12px; }
.cmd button:first-of-type svg { width: 9px; height: 9px; }
.prompt { flex: 1; display: flex; align-items: center; gap: 5px; align-self: stretch; margin-left: 2px; padding-left: 4px; background: #fff; }
.prompt svg { width: 22px; height: 14px; }
.prompt input { width: 14px; height: 15px; padding: 0; border: 0; border-right: 1px solid #000; outline: 0; background: #fff; color: #222; font: 11px/15px "DejaVu Sans Mono", monospace; }
.up { display: flex; align-items: center; align-self: stretch; padding: 0 2px; background: #fff; }
.up svg { width: 8px; height: 8px; }

/* status bar */
.status { display: flex; justify-content: space-between; height: 27px; background: #383838; }
.ltabs { display: flex; padding-left: 11px; height: 17px; }
.ltabs button { min-width: 61px; padding: 0 8px; color: #b2b2b2; background: #555; clip-path: polygon(0 0, 100% 0, 96% 35%, 90% 85%, 84% 100%, 16% 100%, 10% 85%, 4% 35%); }
.ltabs .on { min-width: 53px; color: #f4f4f4; font-weight: 700; background: #727272; }
.ltabs .plus { min-width: 22px; margin-left: 3px; padding: 0; }
.ltabs svg { width: 8px; height: 8px; }
.tools { display: flex; height: 25px; gap: 1px; }
.seg { display: flex; align-items: center; gap: 1px; padding: 0 1px; border: 1px solid #747474; background: #464646; }
.seg button { width: 21px; height: 20px; }
.seg button svg { width: 16px; height: 16px; }
.seg .on { background: #5b8ac5; }
.seg .txt { width: 42px; color: #eee; }
.seg .scale { width: 20px; }
.seg .caret { margin: 0 3px; }
.seg .near { margin: 0; }
.seg .caret:last-child { margin-right: 0; }

/* taskbar */
.taskbar { display: flex; justify-content: space-between; height: 37px; background: linear-gradient(90deg, #22383f, #20343f 60%, #1b2847); border-top: 1px solid #304850; }
.apps { display: flex; }
.apps button { width: 46px; height: 36px; border-bottom: 3px solid transparent; }
.apps button:first-child { width: 45px; }
.apps svg { width: 24px; height: 24px; }
.apps .cur { background: #52676d; border-bottom-color: #76b5ee; }
.apps .run { background: linear-gradient(#76b5ee, #76b5ee) center 33px / 37px 3px no-repeat; background-origin: border-box; background-clip: border-box; }
.tray { display: flex; align-items: center; gap: 7px; margin-right: 3px; padding-right: 10px; border-right: 1px solid #62708a; color: #fff; }
.tray svg { width: 16px; height: 16px; }
.tray .news { width: 22px; }
.weather { font-size: 13px; margin-right: 5px; }
.lang { font-size: 11px; margin-right: 7px; }
.clock { display: flex; flex-direction: column; align-items: center; font: 11px/17px "Open Sans", "DejaVu Sans", sans-serif; }
.date { font-size: 9px; }
.notes { position: relative; margin-left: 12px; width: 26px; height: 22px; }
.notes svg { width: 20px; height: 20px; }
.notes b { position: absolute; right: 0; bottom: -5px; width: 15px; height: 15px; border: 1px solid #aaa; border-radius: 50%; background: #3d4656; font: 10px/13px "Open Sans", sans-serif; text-align: center; }

/* floating tooltip and pointer */
.tip { position: absolute; left: 215px; top: 123px; padding: 3px 3px 4px 5px; border: 1px solid #888; background: #f0f1f6; color: #555c6c; font-size: 11px; z-index: 3; }
.pointer { position: absolute; left: 215px; top: 159px; width: 12px; height: 20px; z-index: 4; }
```
